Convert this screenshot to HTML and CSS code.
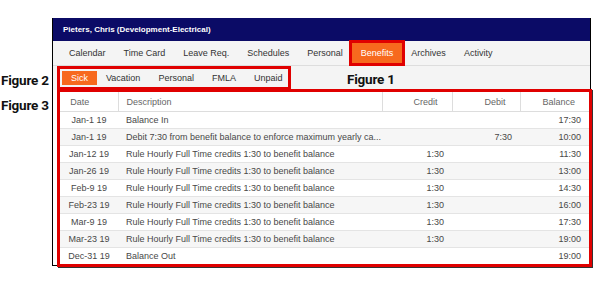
FILE: index.html
```html
<!DOCTYPE html>
<html lang="en">
<head>
  <meta charset="UTF-8" />
  <title>Benefits</title>
  <link rel="stylesheet" href="styles.css">
</head>
<body>
  <div class="sheet">
    <span class="label fig1">Figure 1</span>
    <span class="label fig2">Figure 2</span>
    <span class="label fig3">Figure 3</span>

    <div class="app">
      <div class="app-header">Pieters, Chris (Development-Electrical)</div>

      <nav class="nav">
        <a>Calendar</a>
        <a>Time Card</a>
        <a>Leave Req.</a>
        <a>Schedules</a>
        <a>Personal</a>
        <a class="active marked">Benefits</a>
        <a>Archives</a>
        <a>Activity</a>
      </nav>

      <div class="subbar">
        <div class="subtabs">
          <a class="active">Sick</a>
          <a>Vacation</a>
          <a>Personal</a>
          <a>FMLA</a>
          <a>Unpaid</a>
        </div>
      </div>

      <div class="table-box">
        <table class="ledger">
          <colgroup>
            <col class="c-date">
            <col class="c-desc">
            <col class="c-num">
            <col class="c-debit">
            <col class="c-bal">
          </colgroup>
          <thead>
            <tr>
              <th class="date">Date</th>
              <th class="desc">Description</th>
              <th class="num">Credit</th>
              <th class="num">Debit</th>
              <th class="num">Balance</th>
            </tr>
          </thead>
          <tbody>
            <tr><td class="date">Jan-1 19</td><td class="desc">Balance In</td><td class="num"></td><td class="num"></td><td class="num">17:30</td></tr>
            <tr><td class="date">Jan-1 19</td><td class="desc">Debit 7:30 from benefit balance to enforce maximum yearly ca...</td><td class="num"></td><td class="num">7:30</td><td class="num">10:00</td></tr>
            <tr><td class="date">Jan-12 19</td><td class="desc">Rule Hourly Full Time credits 1:30 to benefit balance</td><td class="num">1:30</td><td class="num"></td><td class="num">11:30</td></tr>
            <tr><td class="date">Jan-26 19</td><td class="desc">Rule Hourly Full Time credits 1:30 to benefit balance</td><td class="num">1:30</td><td class="num"></td><td class="num">13:00</td></tr>
            <tr><td class="date">Feb-9 19</td><td class="desc">Rule Hourly Full Time credits 1:30 to benefit balance</td><td class="num">1:30</td><td class="num"></td><td class="num">14:30</td></tr>
            <tr><td class="date">Feb-23 19</td><td class="desc">Rule Hourly Full Time credits 1:30 to benefit balance</td><td class="num">1:30</td><td class="num"></td><td class="num">16:00</td></tr>
            <tr><td class="date">Mar-9 19</td><td class="desc">Rule Hourly Full Time credits 1:30 to benefit balance</td><td class="num">1:30</td><td class="num"></td><td class="num">17:30</td></tr>
            <tr><td class="date">Mar-23 19</td><td class="desc">Rule Hourly Full Time credits 1:30 to benefit balance</td><td class="num">1:30</td><td class="num"></td><td class="num">19:00</td></tr>
            <tr><td class="date">Dec-31 19</td><td class="desc">Balance Out</td><td class="num"></td><td class="num"></td><td class="num">19:00</td></tr>
          </tbody>
        </table>
      </div>
    </div>
  </div>
</body>
</html>
```

FILE: styles.css
```css
body {
  margin: 0;
  background: #fff;
  font-family: "Liberation Sans", Arial, sans-serif;
}

.sheet {
  position: relative;
  width: 615px;
  height: 294px;
  padding-top: 18px;
  box-sizing: border-box;
}

/* annotation labels */
.label {
  position: absolute;
  font-family: Roboto, "Liberation Sans", sans-serif;
  font-weight: 700;
  font-size: 13.5px;
  line-height: 14px;
  letter-spacing: -0.2px;
  color: #111;
}

.fig1 { left: 347px; top: 72px; }
.fig2 { left: 1px; top: 73px; }
.fig3 { left: 1px; top: 98px; }

.app {
  margin-left: 52px;
  width: 539px;
  border: 1px solid #000;
  border-top: none;
  box-sizing: border-box;
}

.app-header {
  background: #0b0b66;
  color: #fff;
  font-weight: bold;
  font-size: 8px;
  height: 23px;
  line-height: 23px;
  padding-left: 10px;
}

.nav {
  display: flex;
  align-items: center;
  height: 24px;
  padding-left: 7px;
  background: #f4f4f4;
  border-bottom: 1px solid #ddd;
}

.nav a,
.subtabs a {
  padding: 0 9px;
  font-size: 9px;
  color: #333;
}

.nav a {
  line-height: 20px;
}

.nav a.active,
.subtabs a.active {
  background: #f7691e;
  color: #fff;
}

.nav a.marked {
  outline: 3px solid #e00000;
}

.subbar {
  height: 24px;
  background: #f4f4f4;
}

.subtabs {
  display: inline-flex;
  align-items: center;
  height: 24px;
  margin-left: 4px;
  padding-left: 2px;
  border: 3px solid #e00000;
  box-sizing: border-box;
}

.subtabs a {
  line-height: 14px;
}

.subtabs a:last-child {
  padding-right: 6px;
}

.table-box {
  margin: -1px -2px -2px 4px;
  border: 3px solid #e00000;
  background: #fff;
  box-shadow: 1px 1px 0 #333;
  position: relative;
}

.ledger {
  width: 100%;
  border-collapse: collapse;
  table-layout: fixed;
  font-size: 9px;
  color: #484848;
}

.c-date { width: 58px; }
.c-desc { width: 264px; }
.c-num { width: 70px; }
.c-debit { width: 68px; }
.c-bal { width: 69px; }

.ledger th {
  height: 19px;
  padding: 0;
  font-weight: normal;
  color: #666;
  border-right: 1px solid #ddd;
  border-bottom: 1px solid #ddd;
}

.ledger th:last-child {
  border-right: none;
}

.ledger td {
  height: 16px;
  padding: 0;
  border-bottom: 1px solid #e4e4e4;
  white-space: nowrap;
  overflow: hidden;
}

.ledger tbody tr:last-child td {
  border-bottom: none;
}

.ledger tbody tr:nth-child(even) {
  background: #f6f6f6;
}

.ledger .date {
  text-align: center;
}

.ledger th.date {
  padding-right: 18px;
}

.ledger .desc {
  text-align: left;
  padding-left: 8px;
}

.ledger .num {
  text-align: right;
  padding-right: 8px;
}

.ledger th.num {
  padding-right: 14px;
}
```
